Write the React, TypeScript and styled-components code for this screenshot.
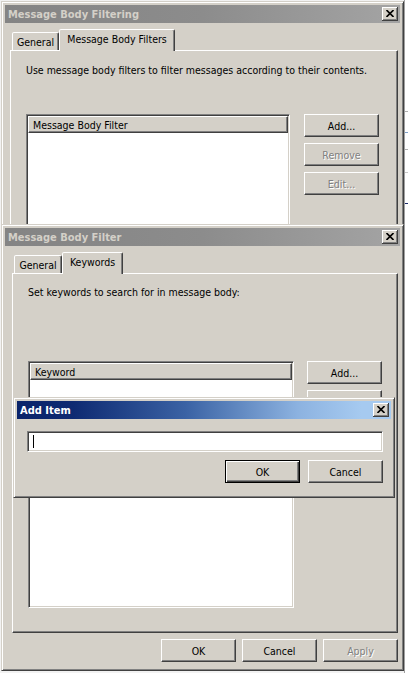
import styled, { createGlobalStyle, css } from "styled-components";

const face = "#d4d0c8";

const GlobalStyle = createGlobalStyle`
  html, body {
    margin: 0;
    padding: 0;
  }
  body {
    background: #f2f2f2;
    font-family: "DejaVu Sans Condensed", "Liberation Sans", sans-serif;
    font-size: 10.5px;
    color: #000;
  }
`;

const Desktop = styled.div`
  position: relative;
  width: 408px;
  height: 673px;
  overflow: hidden;
  background: #f2f2f2;
`;

// strip of some other window peeking out on the right
const BackWindow = styled.div`
  position: absolute;
  left: 404px;
  top: 0;
  width: 20px;
  height: 673px;
  background: #fff;
  border-left: 1px solid #a0a0a0;
  display: flex;
  flex-direction: column;
`;

const BackLine = styled.div<{ $h: number; $c: string }>`
  flex: none;
  height: ${(p) => p.$h}px;
  border-bottom: 1px solid ${(p) => p.$c};
`;

const Window = styled.div<{ $x: number; $y: number; $w: number; $h: number }>`
  position: absolute;
  left: ${(p) => p.$x}px;
  top: ${(p) => p.$y}px;
  width: ${(p) => p.$w}px;
  height: ${(p) => p.$h}px;
  box-sizing: border-box;
  background: ${face};
  border: 1px solid;
  border-color: ${face} #404040 #404040 ${face};
  box-shadow: inset 1px 1px #fff, inset -1px -1px #808080;
  padding: 3px;
  display: flex;
  flex-direction: column;
  overflow: hidden;
`;

const Caption = styled.div<{ $active?: boolean }>`
  flex: none;
  height: 18px;
  display: flex;
  align-items: center;
  justify-content: space-between;
  padding: 0 2px 0 3px;
  background: ${(p) =>
    p.$active
      ? "linear-gradient(90deg, #0a246a 0%, #0e2a72 15%, #3a62a4 45%, #8cb2e0 75%, #a6caf0 92%)"
      : "linear-gradient(90deg, #848484 0%, #8c8c8c 50%, #a4a4a4 100%)"};
  color: ${(p) => (p.$active ? "#fff" : "#d4d0c8")};
  font-family: "DejaVu Sans Condensed", "Liberation Sans", sans-serif;
  font-weight: bold;
  font-size: 11px;
`;

const CloseBox = styled.div`
  width: 16px;
  height: 14px;
  box-sizing: border-box;
  background: ${face};
  box-shadow: inset -1px -1px #404040, inset 1px 1px #fff, inset -2px -2px #808080;
  display: flex;
  align-items: center;
  justify-content: center;
  padding: 0 1px 1px 0;
`;

const TabRow = styled.div<{ $ml: number }>`
  flex: none;
  display: flex;
  align-items: flex-end;
  margin: 6px 0 -1px ${(p) => p.$ml}px;
  position: relative;
  z-index: 1;
`;

const Tab = styled.div<{ $selected?: boolean; $w: number }>`
  box-sizing: border-box;
  width: ${(p) => p.$w}px;
  height: ${(p) => (p.$selected ? 22 : 18)}px;
  margin-bottom: ${(p) => (p.$selected ? 0 : 1)}px;
  background: ${face};
  border: 1px solid;
  border-bottom: none;
  border-color: #fff #404040 transparent #fff;
  border-radius: 2px 2px 0 0;
  box-shadow: inset -1px 0 #808080;
  display: flex;
  align-items: ${(p) => (p.$selected ? "flex-start" : "center")};
  padding-top: ${(p) => (p.$selected ? 3 : 1)}px;
  justify-content: center;
  white-space: nowrap;
`;

const Panel = styled.div<{ $ml: number; $w: number; $h: number; $pt: number }>`
  flex: none;
  box-sizing: border-box;
  margin-left: ${(p) => p.$ml}px;
  width: ${(p) => p.$w}px;
  height: ${(p) => p.$h}px;
  background: ${face};
  border: 1px solid;
  border-color: #fff #404040 #404040 #fff;
  box-shadow: inset -1px -1px #808080;
  padding: ${(p) => p.$pt}px 0 0 15px;
  display: flex;
  flex-direction: column;
`;

const Hint = styled.div`
  line-height: 13px;
  white-space: nowrap;
`;

const ListRow = styled.div<{ $mt: number; $gap: number }>`
  display: flex;
  align-items: flex-start;
  margin-top: ${(p) => p.$mt}px;
  gap: ${(p) => p.$gap}px;
`;

const ListView = styled.div<{ $w: number; $h: number }>`
  flex: none;
  width: ${(p) => p.$w}px;
  height: ${(p) => p.$h}px;
  box-sizing: border-box;
  background: #fff;
  border: 1px solid;
  border-color: #808080 #fff #fff #808080;
  box-shadow: inset 1px 1px #404040, inset -1px -1px ${face};
  padding: 1px;
`;

const ListHeader = styled.div`
  box-sizing: border-box;
  height: 17px;
  background: ${face};
  border: 1px solid;
  border-color: #fff #404040 #404040 #fff;
  box-shadow: inset -1px -1px #808080;
  padding-left: 4px;
  display: flex;
  align-items: center;
  white-space: nowrap;
`;

const ButtonColumn = styled.div`
  display: flex;
  flex-direction: column;
  gap: 6px;
`;

const Button = styled.button<{ $default?: boolean }>`
  flex: none;
  width: 75px;
  height: 23px;
  box-sizing: border-box;
  margin: 0;
  padding: 0;
  font: inherit;
  color: #000;
  background: ${face};
  border: 1px solid;
  border-color: #fff #404040 #404040 #fff;
  box-shadow: inset -1px -1px #808080;
  &:disabled {
    color: #808080;
    text-shadow: 1px 1px #fff;
  }
  ${(p) =>
    p.$default &&
    css`
      border-color: #000;
      box-shadow: inset 1px 1px #fff, inset -1px -1px #404040, inset -2px -2px #808080;
    `}
`;

const FooterRow = styled.div<{ $mr: number }>`
  display: flex;
  justify-content: flex-end;
  gap: 6px;
  margin: 6px ${(p) => p.$mr}px 0 0;
`;

const ItemBody = styled.div`
  display: flex;
  flex-direction: column;
  padding: 12px 8px 0 10px;
`;

const TextInput = styled.div`
  box-sizing: border-box;
  height: 21px;
  background: #fff;
  border: 1px solid;
  border-color: #808080 #fff #fff #808080;
  box-shadow: inset 1px 1px #404040, inset -1px -1px ${face};
  display: flex;
  align-items: center;
  padding-left: 5px;
`;

const Caret = styled.span`
  width: 1px;
  height: 13px;
  background: #000;
`;

const ItemButtons = styled.div`
  display: flex;
  justify-content: flex-end;
  gap: 8px;
  margin-top: 8px;
`;

function CloseButton() {
  return (
    <CloseBox>
      <svg width="8" height="7" viewBox="0 0 8 7">
        <path d="M0.5 0 L7.5 7 M7.5 0 L0.5 7" stroke="#000" strokeWidth="1.6" fill="none" />
      </svg>
    </CloseBox>
  );
}

export default function App() {
  return (
    <Desktop>
      <GlobalStyle />
      <BackWindow>
        <BackLine $h={111} $c="#b0b0b0" />
        <BackLine $h={9} $c="#ffffff" />
        <BackLine $h={10} $c="#7fa0c8" />
        <BackLine $h={16} $c="#b0b0b0" />
        <BackLine $h={22} $c="#c8c8c8" />
        <BackLine $h={30} $c="#1a2a6a" />
      </BackWindow>

      <Window $x={1} $y={1} $w={403} $h={300}>
        <Caption>
          <span>Message Body Filtering</span>
          <CloseButton />
        </Caption>
        <TabRow $ml={7}>
          <Tab $w={47}>General</Tab>
          <Tab $w={116} $selected>
            Message Body Filters
          </Tab>
        </TabRow>
        <Panel $ml={5} $w={388} $h={260} $pt={13}>
          <Hint>Use message body filters to filter messages according to their contents.</Hint>
          <ListRow $mt={37} $gap={14}>
            <ListView $w={264} $h={140}>
              <ListHeader>Message Body Filter</ListHeader>
            </ListView>
            <ButtonColumn>
              <Button>Add...</Button>
              <Button disabled>Remove</Button>
              <Button disabled>Edit...</Button>
            </ButtonColumn>
          </ListRow>
        </Panel>
      </Window>

      <Window $x={1} $y={224} $w={403} $h={447}>
        <Caption>
          <span>Message Body Filter</span>
          <CloseButton />
        </Caption>
        <TabRow $ml={9}>
          <Tab $w={48}>General</Tab>
          <Tab $w={61} $selected>
            Keywords
          </Tab>
        </TabRow>
        <Panel $ml={7} $w={386} $h={360} $pt={12}>
          <Hint>Set keywords to search for in message body:</Hint>
          <ListRow $mt={62} $gap={13}>
            <ListView $w={266} $h={247}>
              <ListHeader>Keyword</ListHeader>
            </ListView>
            <ButtonColumn>
              <Button>Add...</Button>
              <Button disabled>Remove</Button>
              <Button disabled>Edit...</Button>
            </ButtonColumn>
          </ListRow>
        </Panel>
        <FooterRow $mr={2}>
          <Button>OK</Button>
          <Button>Cancel</Button>
          <Button disabled>Apply</Button>
        </FooterRow>
      </Window>

      <Window $x={13} $y={397} $w={382} $h={101}>
        <Caption $active>
          <span>Add Item</span>
          <CloseButton />
        </Caption>
        <ItemBody>
          <TextInput>
            <Caret />
          </TextInput>
          <ItemButtons>
            <Button $default>OK</Button>
            <Button>Cancel</Button>
          </ItemButtons>
        </ItemBody>
      </Window>
    </Desktop>
  );
}
